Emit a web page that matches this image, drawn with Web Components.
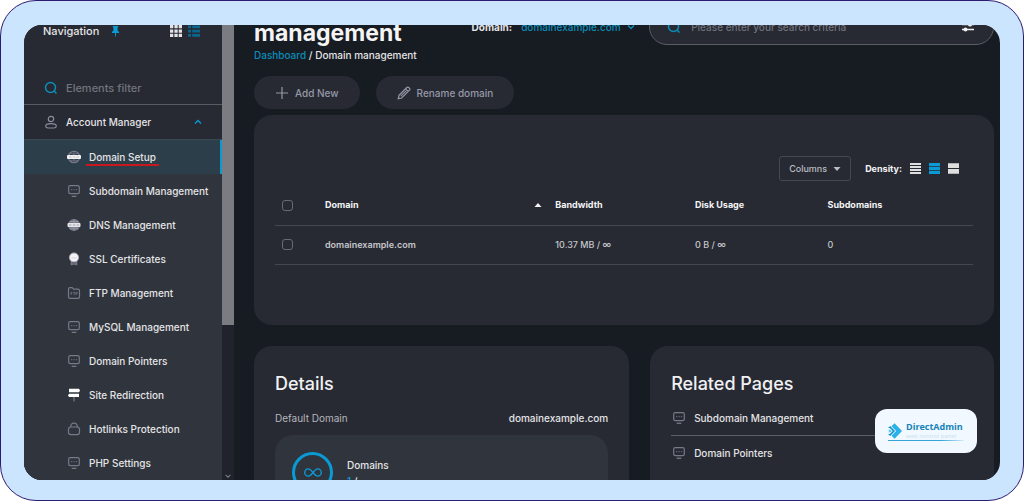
<!DOCTYPE html>
<html lang="en">
<head>
<meta charset="utf-8">
<meta name="viewport" content="width=device-width, initial-scale=1">
<title>Domain management</title>
<style>
  :root {
    --accent: #0a9bd6;
    --link: #0b8db8;
    --page: #171b22;
    --panel: #272a33;
    --raised: #30343d;
    --line: #454852;
    --muted: #8b8c9c;
  }
  body {
    margin: 0;
    background: #fff;
    color: #e4e4e6;
    font: 500 10px/16px Inter, "Open Sans", sans-serif;
  }
</style>
</head>
<body>

<da-frame>
  <da-sidebar slot="side">
    <da-nav-item icon="globe" active>Domain Setup</da-nav-item>
    <da-nav-item icon="monitor">Subdomain Management</da-nav-item>
    <da-nav-item icon="dns">DNS Management</da-nav-item>
    <da-nav-item icon="ssl">SSL Certificates</da-nav-item>
    <da-nav-item icon="folder">FTP Management</da-nav-item>
    <da-nav-item icon="monitor">MySQL Management</da-nav-item>
    <da-nav-item icon="monitor">Domain Pointers</da-nav-item>
    <da-nav-item icon="sign">Site Redirection</da-nav-item>
    <da-nav-item icon="lock">Hotlinks Protection</da-nav-item>
    <da-nav-item icon="monitor">PHP Settings</da-nav-item>
  </da-sidebar>
  <da-page>
    <da-header slot="header">management</da-header>
    <da-action slot="actions" icon="plus">Add New</da-action>
    <da-action slot="actions" icon="pencil">Rename domain</da-action>
    <da-domain-table></da-domain-table>
    <da-panel slot="panels" heading="Details">
      <da-details></da-details>
    </da-panel>
    <da-panel slot="panels" heading="Related Pages">
      <da-related>Subdomain Management</da-related>
      <da-related>Domain Pointers</da-related>
    </da-panel>
  </da-page>
  <da-logo slot="badge"></da-logo>
</da-frame>

<script>
  // name: [viewBox, markup]
  const ICONS = {
    search: ['0 0 14 14', '<circle cx="6.5" cy="6.5" r="5" stroke-width="1.5"/><path d="M10 10l2.5 2.5" stroke-width="1.5"/>'],
    user: ['0 0 14 14', '<circle cx="7" cy="4" r="2.7"/><path d="M1.7 11c0-2 2-2.4 5.3-2.4s5.3.4 5.3 2.4-1.6 2-5.3 2-5.3 0-5.3-2z"/>'],
    up: ['0 0 10 10', '<path d="M2 6.5l3-3 3 3" stroke-width="1.4"/>'],
    down: ['0 0 10 10', '<path d="M2 3.5l3 3 3-3" stroke-width="1.4"/>'],
    pin: ['0 0 10 12', '<path d="M2 0h6v1.3H7.300v3.500L9 6.500v1.200H1V6.500l1.700-1.700V1.300H2z" fill="currentColor" stroke="none"/><path d="M5 7v4.500" stroke-width="1"/>'],
    grid: ['0 0 12 12', '<path d="M0 0h3.300v3.300H0zM4.400 0h3.300v3.300H4.400zM8.700 0H12v3.300H8.700zM0 4.400h3.300v3.300H0zM4.400 4.400h3.300v3.300H4.400zM8.700 4.400H12v3.300H8.700zM0 8.700h3.300V12H0zM4.400 8.700h3.300V12H4.400zM8.700 8.700H12V12H8.700z" fill="currentColor" stroke="none"/>'],
    list: ['0 0 12 12', '<path d="M0 .5h3v2.800H0zM4.200.5H12v2.800H4.200zM0 4.700h3v2.800H0zM4.200 4.700H12v2.800H4.200zM0 9h3v2.800H0zM4.200 9H12v2.800H4.200z" fill="currentColor" stroke="none"/>'],
    globe: ['0 0 14 14', '<circle cx="7" cy="7" r="5.700"/><path d="M7 1.300v11.400M3 2.900C5 4.300 9 4.300 11 2.900M3 11.100c2-1.400 6-1.400 8 0" stroke-width=".8"/><rect y="5" width="14" height="4" rx="1" fill="#f1f1f3" stroke="none"/><path d="M2 7h2.500M5.800 7h2.500M9.500 7H12" stroke="#a0a3ac" stroke-width=".6"/>'],
    dns: ['0 0 14 14', '<circle cx="7" cy="7" r="6" fill="currentColor" stroke="none"/><path d="M2.500 3.500h9M2.500 10.500h9M7 1v12" stroke="#9d9eae" stroke-width=".6"/><rect x=".5" y="5" width="13" height="4" rx="1" fill="#e6e6ea" stroke="none"/><path d="M2 7h2.500M5.800 7h2.500M9.500 7H12" stroke="#8b8c9c" stroke-width=".8"/>'],
    ssl: ['0 0 14 14', '<path d="M4.500 9v4.300M9.500 9v4.300M4.500 12h5" stroke-width="1.600"/><circle cx="7" cy="5.500" r="4.600" fill="#f4f4f6" stroke="#a3a4b1" stroke-width="1"/><path d="M4.500 6h5" stroke="#c3c4cc" stroke-width=".7"/>'],
    monitor: ['0 0 14 14', '<rect x="1.700" y="1.700" width="10.600" height="8" rx="1.600"/><path d="M4 5.700h1.300M6.400 5.700h1.300M8.800 5.700h1.300" stroke-width=".9"/><path d="M4.700 12.300h4.600" stroke-width="1.300"/>'],
    folder: ['0 0 14 14', '<path d="M1.500 3.200q0-1.600 1.600-1.600h2l1.600 1.600h4.200q1.600 0 1.600 1.600v5.900q0 1.600-1.600 1.600H3.100q-1.600 0-1.600-1.600z"/><path d="M4 9V6.300h1.300M4 7.600h1.100M6 6.300h2M7 6.300V9M8.800 9V6.300h1.400v1.400H8.800" stroke-width=".7"/>'],
    sign: ['0 0 14 14', '<path d="M7 8v5.500"/><path d="M2 .8h10l1 1.700-1 1.700H2zM2 5.800h10v3.300H2L1 7.500z" fill="#fff" stroke="none"/>'],
    lock: ['0 0 14 14', '<rect x="1.500" y="5" width="11" height="7.600" rx="2.400"/><path d="M3.700 5c0-2.400 1-3.900 3.300-3.900s3.300 1.500 3.300 3.900"/>'],
    plus: ['0 0 14 14', '<path d="M7 1v12M1 7h12"/>'],
    pencil: ['0 0 14 14', '<path d="M1.300 12.700l.7-3.400 7.800-7.800q1-.8 1.900 0l.8.8q.8.900 0 1.900L4.700 12zM8.500 2.800l2.700 2.700M3.800 10.200l5.300-5.300"/>'],
    sliders: ['0 0 14 12', '<path d="M1 3.500h12M1 8.500h12" stroke-width="1.400"/><circle cx="9" cy="3.500" r="2" fill="currentColor" stroke="none"/><circle cx="4.500" cy="8.500" r="2" fill="currentColor" stroke="none"/>'],
    sort: ['0 0 8 8', '<path d="M.5 6L4 2l3.500 4z" fill="currentColor" stroke="none"/>'],
    caret: ['0 0 8 8', '<path d="M.5 2L4 6l3.500-4z" fill="currentColor" stroke="none"/>'],
    dense: ['0 0 12 12', '<path d="M0 1h12M0 4.300h12M0 7.600h12M0 11h12" stroke-width="2.200"/>'],
    normal: ['0 0 12 12', '<path d="M0 1.800h12M0 6h12M0 10.200h12" stroke-width="3.400"/>'],
    loose: ['0 0 12 12', '<path d="M0 2.800h12M0 9.200h12" stroke-width="5.200"/>'],
    infinity: ['0 0 20 12', '<path d="M10 6C7.800 3.200 6.500 2 4.800 2a4 4 0 000 8C6.500 10 7.800 8.800 10 6s3.500-4 5.200-4a4 4 0 010 8C13.500 10 12.200 8.800 10 6z" stroke-width="1.500"/>'],
    brand: ['0 0 16 18', '<g stroke="none"><path fill="#29b2ea" d="M4 3.500L7.500.2 16 9l-8.500 8.800L4 14.500 9.300 9z"/><path fill="#1593cf" d="M0 5.500l2.500-2.200L8 9l-5.500 5.700L0 12.500h2L5.500 9 2 5.500z"/><path fill="#57c9f2" d="M0 7.500h3L4.500 9 3 10.500H0L1.500 9z"/></g>']
  };

  // Shared base: clone the class markup into an open root
  class DaElement extends HTMLElement {
    constructor() {
      super();
      const tpl = document.createElement('template');
      tpl.innerHTML = `<style>
        * { box-sizing: border-box; }
        button, input, select { font: inherit; color: inherit; background: none; border: 0; margin: 0; padding: 0; }
        a { color: inherit; text-decoration: none; }
      </style>` + this.constructor.markup;
      this.attachShadow({ mode: 'open' }).appendChild(tpl.content.cloneNode(true));
    }
    $(sel) { return this.shadowRoot.querySelector(sel); }
  }

  class DaIcon extends DaElement {
    static markup = `<style>
      :host { display: inline-flex; flex: none; width: 14px; height: 14px; }
      svg { width: 100%; height: 100%; fill: none; stroke: currentColor; stroke-width: 1.2; }
    </style><svg aria-hidden="true"></svg>`;
    static get observedAttributes() { return ['name']; }
    attributeChangedCallback(attr, oldVal, newVal) {
      const [box, shape] = ICONS[newVal];
      this.$('svg').setAttribute('viewBox', box);
      this.$('svg').innerHTML = shape;
    }
  }

  // Rounded outer border with the clipped window inside
  class DaFrame extends DaElement {
    static markup = `<style>
      :host { display: flex; height: 100vh; min-height: 400px; box-sizing: border-box; padding: 24px 23px 20px; background: #cce5ff; border: 1px solid #2c1c72; border-radius: 36px; }
      .window { position: relative; flex: 1; min-width: 0; display: flex; overflow: hidden; border-radius: 18px; background: var(--page); }
      ::slotted([slot="badge"]) { position: absolute; right: 23px; bottom: 27px; }
    </style>
    <div class="window">
      <slot name="side"></slot>
      <slot></slot>
      <slot name="badge"></slot>
    </div>`;
  }

  class DaSidebar extends DaElement {
    static markup = `<style>
      :host { display: flex; flex: none; width: 210px; }
      nav { flex: 1; display: flex; flex-direction: column; min-width: 0; background: var(--panel); }
      .top { display: flex; align-items: center; height: 12px; padding: 0 22px 0 19px; font-size: 11px; }
      .top button { display: flex; }
      .pin { margin: 0 auto 0 12px; color: var(--accent); }
      .pin da-icon { width: 9px; height: 11px; }
      .view da-icon { width: 12px; height: 12px; }
      .view + .view { margin-left: 6px; color: #0a668c; }
      .filter { display: flex; align-items: center; gap: 8px; height: 34px; margin-top: 34px; padding: 0 20px; border-bottom: 1px solid #595c66; color: var(--link); font-size: 11px; }
      .filter input { width: 100%; color: #85868c; outline: 0; }
      .filter input::placeholder { color: #72747d; opacity: 1; }
      .group { display: flex; align-items: center; gap: 8px; height: 34px; padding: 0 19px 0 20px; text-align: left; }
      .group span { flex: 1; }
      .group da-icon { color: var(--muted); }
      .group .arrow { width: 10px; height: 10px; color: var(--accent); }
      .items { flex: 1; display: flex; flex-direction: column; border-top: 1px solid #3a4852; background: var(--raised); }
      .scroll { width: 12px; display: flex; flex-direction: column; justify-content: space-between; align-items: center; background: #20232b; color: #777981; }
      .thumb { width: 100%; height: 66%; background: #7b7c81; }
      .scroll da-icon { width: 8px; height: 8px; }
    </style>
    <nav aria-label="Navigation">
      <div class="top">
        <span>Navigation</span>
        <button class="pin" aria-label="Pin"><da-icon name="pin"></da-icon></button>
        <button class="view" aria-label="Grid view"><da-icon name="grid"></da-icon></button>
        <button class="view" aria-label="List view"><da-icon name="list"></da-icon></button>
      </div>
      <label class="filter"><da-icon name="search"></da-icon><input type="text" placeholder="Elements filter" aria-label="Elements filter"></label>
      <button class="group" aria-expanded="true"><da-icon name="user"></da-icon><span>Account Manager</span><da-icon class="arrow" name="up"></da-icon></button>
      <div class="items"><slot></slot></div>
    </nav>
    <div class="scroll"><div class="thumb"></div><da-icon name="down"></da-icon></div>`;
  }

  class DaNavItem extends DaElement {
    static markup = `<style>
      :host { display: flex; flex: 1; min-height: 34px; }
      a { flex: 1; display: flex; align-items: center; gap: 8px; padding-left: 43px; white-space: nowrap; }
      da-icon { color: #777988; }
      :host([active]) { background: #2d3e4b; border-right: 2px solid var(--accent); }
      :host([active]) span { margin: 0 -3px; padding: 0 3px; box-shadow: 0 2px #c9171e; line-height: 14px; }
    </style><a href="#"><da-icon></da-icon><span><slot></slot></span></a>`;
    constructor() {
      super();
      this.$('da-icon').setAttribute('name', this.getAttribute('icon'));
    }
  }

  class DaPage extends DaElement {
    // the page is scrolled a little, so its header starts above the window
    static markup = `<style>
      :host { display: block; flex: 1; min-width: 0; }
      main { margin-top: -16px; padding: 0 6px 0 20px; }
      .actions { display: flex; gap: 16px; margin: 13px 0 6px; }
      .panels { display: grid; grid-template-columns: 12fr 11fr; gap: 21px; margin-top: 21px; }
    </style>
    <main>
      <slot name="header"></slot>
      <div class="actions"><slot name="actions"></slot></div>
      <slot></slot>
      <div class="panels"><slot name="panels"></slot></div>
    </main>`;
  }

  class DaHeader extends DaElement {
    static markup = `<style>
      :host { display: block; }
      .row { display: flex; align-items: flex-start; height: 38px; }
      h1 { align-self: flex-end; margin: 0 auto 0 0; color: #f4f4f5; font-size: 23px; line-height: 28px; font-weight: 700; }
      .domain { display: flex; align-items: center; gap: 9px; height: 36px; margin-right: 13px; font-weight: 700; }
      .pick { display: flex; align-items: center; gap: 5px; color: var(--link); font-weight: 500; }
      select { appearance: none; outline: 0; }
      .pick da-icon { width: 10px; height: 10px; }
      .search { display: flex; align-items: center; gap: 10px; width: 46.6%; height: 36px; padding: 0 18px 0 17px; border: 1px solid #5b5d66; border-radius: 18px; background: var(--panel); color: #f1f1f3; }
      .search input { flex: 1; min-width: 0; outline: 0; }
      .search input::placeholder { color: #6f717b; opacity: 1; }
      .search button { display: flex; }
      .lens { color: var(--link); }
      .crumbs a { color: var(--link); }
    </style>
    <div class="row">
      <h1><slot></slot></h1>
      <div class="domain">
        <label for="domain">Domain:</label>
        <div class="pick"><select id="domain"><option>domainexample.com</option></select><da-icon name="down"></da-icon></div>
      </div>
      <div class="search">
        <da-icon class="lens" name="search"></da-icon>
        <input type="text" placeholder="Please enter your search criteria" aria-label="Search">
        <button aria-label="Search options"><da-icon name="sliders"></da-icon></button>
      </div>
    </div>
    <div class="crumbs"><a href="#">Dashboard</a> / Domain management</div>`;
  }

  class DaAction extends DaElement {
    static markup = `<style>
      :host { display: block; }
      button { display: flex; align-items: center; gap: 6px; height: 33px; padding: 0 21px; border-radius: 17px; background: var(--panel); color: #9698a8; }
    </style><button><da-icon></da-icon><slot></slot></button>`;
    constructor() {
      super();
      this.$('da-icon').setAttribute('name', this.getAttribute('icon'));
    }
  }

  class DaDomainTable extends DaElement {
    static markup = `<style>
      :host { display: block; padding: 41px 21px 60px; border-radius: 18px; background: var(--panel); font-size: 9px; }
      .tools { display: flex; justify-content: flex-end; align-items: center; gap: 8px; padding-right: 14px; }
      .tools button { display: flex; color: #dedede; }
      .tools .columns { align-items: center; gap: 6px; height: 25px; padding: 0 9px; margin-right: 6px; border: 1px solid #454751; border-radius: 3px; color: #bcbdc1; }
      .tools .on { color: var(--accent); }
      .tools strong { color: #f4f4f5; font-weight: 700; }
      .tools da-icon { width: 11px; height: 11px; }
      .tools .columns da-icon, .sort da-icon { width: 8px; height: 8px; }
      table { width: 100%; margin-top: 5px; border-collapse: collapse; table-layout: fixed; }
      th, td { height: 39px; padding: 0; border-bottom: 1px solid var(--line); text-align: left; font-weight: 500; color: #c5c6ca; }
      th { color: #f4f4f5; font-weight: 700; }
      td b { font-weight: 600; }
      .sort { display: flex; justify-content: space-between; align-items: center; padding-right: 13px; }
      input { display: block; appearance: none; width: 11px; height: 11px; margin-left: 7px; border: 1px solid #666978; border-radius: 3px; }
    </style>
    <div class="tools">
      <button class="columns" aria-haspopup="true">Columns <da-icon name="caret"></da-icon></button>
      <strong>Density:</strong>
      <button aria-label="Compact"><da-icon name="dense"></da-icon></button>
      <button class="on" aria-label="Normal"><da-icon name="normal"></da-icon></button>
      <button aria-label="Spacious"><da-icon name="loose"></da-icon></button>
    </div>
    <table>
      <colgroup><col style="width: 50px"><col style="width: 33%"><col style="width: 20%"><col style="width: 19%"><col></colgroup>
      <thead>
        <tr>
          <th><input type="checkbox" aria-label="Select all"></th>
          <th aria-sort="ascending"><div class="sort">Domain <da-icon name="sort"></da-icon></div></th>
          <th>Bandwidth</th><th>Disk Usage</th><th>Subdomains</th>
        </tr>
      </thead>
      <tbody>
        <tr>
          <td><input type="checkbox" aria-label="Select domainexample.com"></td>
          <td><b>domainexample.com</b></td><td>10.37 MB / ∞</td><td>0 B / ∞</td><td>0</td>
        </tr>
      </tbody>
    </table>`;
  }

  class DaPanel extends DaElement {
    static markup = `<style>
      :host { display: block; min-width: 0; padding: 26px 21px 21px; border-radius: 18px; background: var(--panel); }
      h2 { margin: 0 0 14px; color: #f1f1f3; font-size: 18px; line-height: 24px; font-weight: 500; }
    </style><h2></h2><slot></slot>`;
    constructor() {
      super();
      this.$('h2').textContent = this.getAttribute('heading');
    }
  }

  class DaDetails extends DaElement {
    static markup = `<style>
      :host { display: block; }
      .row { display: flex; justify-content: space-between; }
      .row span { color: #b4b5bb; font-weight: 400; }
      .usage { display: flex; gap: 14px; margin-top: 9px; padding: 17px; border-radius: 18px; background: var(--raised); }
      .ring { display: flex; align-items: center; justify-content: center; width: 41px; height: 41px; border: 3px solid var(--accent); border-radius: 50%; color: var(--accent); }
      .ring da-icon { width: 18px; height: 11px; }
      .count { padding-top: 5px; }
      .count em { color: var(--accent); font-style: normal; }
    </style>
    <div class="row"><span>Default Domain</span><div>domainexample.com</div></div>
    <div class="usage">
      <div class="ring"><da-icon name="infinity"></da-icon></div>
      <div class="count">Domains<div><em>1</em> / ∞</div></div>
    </div>`;
  }

  class DaRelated extends DaElement {
    static markup = `<style>
      :host { display: block; padding-bottom: 9px; }
      :host(:not(:last-child)) { border-bottom: 1px solid #5b5d68; margin-bottom: 9px; }
      a { display: flex; align-items: center; gap: 8px; padding-left: 1px; }
      da-icon { color: #777988; }
    </style><a href="#"><da-icon name="monitor"></da-icon><slot></slot></a>`;
  }

  class DaLogo extends DaElement {
    static markup = `<style>
      :host { display: flex; flex-direction: column; justify-content: center; box-sizing: border-box; width: 102px; height: 44px; padding: 0 13px; border-radius: 12px; background: #f1f8ff; }
      .mark { display: flex; align-items: center; gap: 4px; }
      .mark da-icon { width: 14px; height: 16px; }
      .name { color: #1583b8; font: 700 9px/11px "Open Sans", sans-serif; }
      small { display: block; color: #c5dfee; font: 400 6px/8px "Open Sans", sans-serif; }
      hr { width: 100%; height: 1px; margin: 0; border: 0; background: linear-gradient(90deg, #35a5d8 70%, #d5ebf7); }
    </style>
    <div class="mark"><da-icon name="brand"></da-icon><div class="name">DirectAdmin<small>web control panel</small></div></div>
    <hr>`;
  }

  customElements.define('da-icon', DaIcon);
  customElements.define('da-frame', DaFrame);
  customElements.define('da-sidebar', DaSidebar);
  customElements.define('da-nav-item', DaNavItem);
  customElements.define('da-page', DaPage);
  customElements.define('da-header', DaHeader);
  customElements.define('da-action', DaAction);
  customElements.define('da-domain-table', DaDomainTable);
  customElements.define('da-panel', DaPanel);
  customElements.define('da-details', DaDetails);
  customElements.define('da-related', DaRelated);
  customElements.define('da-logo', DaLogo);
</script>
</body>
</html>
